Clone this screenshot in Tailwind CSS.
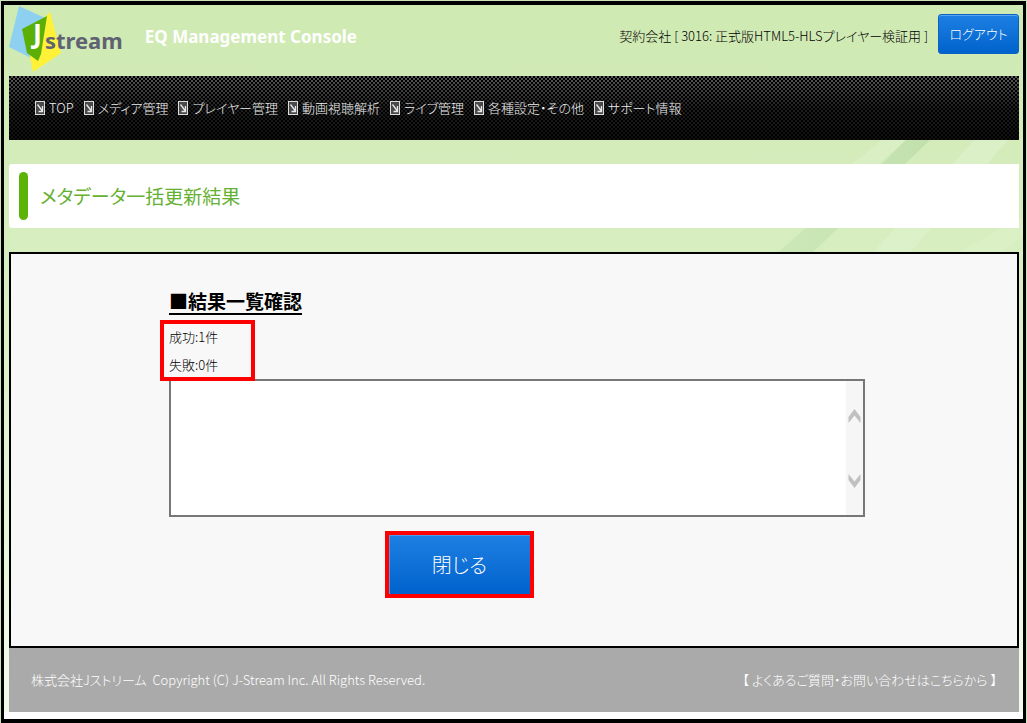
<!DOCTYPE html>
<html lang="ja">
<head>
    <meta charset="UTF-8">
    <meta name="viewport" content="width=device-width, initial-scale=1.0">
    <title>EQ Management Console</title>
    <script src="https://cdn.jsdelivr.net/npm/@tailwindcss/browser@4"></script>
</head>
<body class="bg-[#cfe3bd] p-px font-['Noto_Sans_CJK_JP',sans-serif] text-[13px] font-light text-black [font-feature-settings:'palt']">
    <!-- icon shared by the menu items -->
    <svg class="hidden" aria-hidden="true">
        <symbol id="menu-icon" viewBox="0 0 10 14">
            <path d="M0 0h10v14H0z" fill="#dddddd" />
            <path d="M1 1h8v12H1z" fill="#4a4a4a" />
            <path d="M2.500 3.500L7 9.500M7.500 5v5.500H3.500" fill="none" stroke="#e8e8e8" stroke-width="1.300" />
        </symbol>
    </svg>

    <div class="relative flex min-h-[calc(100vh-2px)] flex-col border-x-3 border-y-4 border-black bg-linear-to-b from-[#d0eab4] from-5% via-[#d7eec0] via-35% to-[#f4fdec] pt-px pr-1 pl-[5px]">

        <!-- background streaks -->
        <svg class="absolute top-[134px] right-0 h-[116px] w-[260px]" viewBox="0 0 260 116" preserveAspectRatio="none" aria-hidden="true">
            <defs>
                <linearGradient id="dark" x1="0" y1="0" x2="1" y2="0">
                    <stop offset="0" stop-color="#b5d9a4" stop-opacity="0.3" />
                    <stop offset="1" stop-color="#b5d9a4" stop-opacity="0.6" />
                </linearGradient>
            </defs>
            <path d="M144 0h24L47 116H12z" fill="url(#dark)" />
            <path d="M120 0h24L118 26H88z" fill="#e0f2ce" opacity="0.5" />
            <path d="M212 0h34L145 116h-37z" fill="#e2f3d2" opacity="0.5" />
            <path d="M260 78v20l-24 18h-48z" fill="#e0f2ce" opacity="0.4" />
        </svg>

        <header class="relative flex h-[70px] justify-between">
            <div class="flex gap-[22px]">
                <a href="#" class="flex" aria-label="J stream">
                    <svg class="h-[66px] w-[54px]" viewBox="0 0 54 66" aria-hidden="true">
                        <path d="M10 0L36 12L28 55L0 41z" fill="#8dd0f0" />
                        <path d="M41 6L52 47L24 66L17 30z" fill="#fff137" />
                        <path d="M13 23L38 10L32 48L29 55L18 47z" fill="#5cb005" />
                        <text x="24" y="37" fill="#fff" font-family="Noto Sans" font-weight="700" font-size="27">J</text>
                    </svg>
                    <span class="-ml-[18px] pt-[11px] font-['Noto_Sans',sans-serif] text-[22px] leading-[46px] font-bold text-[#5f6272]">stream</span>
                </a>
                <span class="pt-[15px] font-['Noto_Sans',sans-serif] text-[17px] leading-[32px] font-bold text-white">EQ Management Console</span>
            </div>
            <div class="flex items-start gap-[10px]">
                <p class="pt-[15px] leading-[30px]">契約会社 [ 3016: 正式版HTML5-HLSプレイヤー検証用 ]</p>
                <button type="button" class="mt-2 h-10 w-[81px] rounded-[3px] border border-[#0a62c6] bg-linear-to-b from-[#1d7fe2] to-[#0062cc] text-[13px] font-light text-white shadow-[inset_0_1px_0_#5aa5ee]">ログアウト</button>
            </div>
        </header>

        <nav class="relative h-16 bg-black bg-[repeating-conic-gradient(#ffffff_0_25%,transparent_0_50%)] bg-size-[4px_4px]">
            <ul class="flex h-full items-center gap-[10px] bg-linear-to-b from-black/65 via-black/88 to-black/94 px-[26px] text-[#eeeeee]">
                <li><a href="#" class="flex items-center gap-1"><svg class="h-[14px] w-[10px]" aria-hidden="true"><use href="#menu-icon" /></svg>TOP</a></li>
                <li><a href="#" class="flex items-center gap-1"><svg class="h-[14px] w-[10px]" aria-hidden="true"><use href="#menu-icon" /></svg>メディア管理</a></li>
                <li><a href="#" class="flex items-center gap-1"><svg class="h-[14px] w-[10px]" aria-hidden="true"><use href="#menu-icon" /></svg>プレイヤー管理</a></li>
                <li><a href="#" class="flex items-center gap-1"><svg class="h-[14px] w-[10px]" aria-hidden="true"><use href="#menu-icon" /></svg>動画視聴解析</a></li>
                <li><a href="#" class="flex items-center gap-1"><svg class="h-[14px] w-[10px]" aria-hidden="true"><use href="#menu-icon" /></svg>ライブ管理</a></li>
                <li><a href="#" class="flex items-center gap-1"><svg class="h-[14px] w-[10px]" aria-hidden="true"><use href="#menu-icon" /></svg>各種設定・その他</a></li>
                <li><a href="#" class="flex items-center gap-1"><svg class="h-[14px] w-[10px]" aria-hidden="true"><use href="#menu-icon" /></svg>サポート情報</a></li>
            </ul>
        </nav>

        <div class="relative my-6 flex h-16 items-center gap-3 rounded-l-[3px] bg-white px-[10px]">
            <span class="h-12 w-[9px] rounded-full bg-[#5cb308]"></span>
            <h1 class="text-[19px] font-normal text-[#66b032]">メタデータ一括更新結果</h1>
        </div>

        <main class="relative flex-1 border-2 border-black bg-[#f8f8f8] pt-[30px] pr-[152px] pb-12 pl-[158px]">
            <h2 class="text-[19px] leading-[34px] font-bold underline decoration-2 underline-offset-4">■結果一覧確認</h2>
            <div class="relative mt-[5px] leading-7">
                <p>成功:1件</p>
                <p>失敗:0件</p>
                <div class="absolute -top-[3px] -left-[9px] z-10 h-[61px] w-[95px] border-4 border-[#ff0000]"></div>
            </div>
            <div class="relative h-[138px]">
                <textarea readonly aria-label="結果一覧" class="block h-full w-full resize-none overflow-hidden border-2 border-[#777777] bg-white p-1 pr-5"></textarea>
                <div class="absolute inset-y-[2px] right-[2px] flex w-[17px] flex-col items-center justify-center gap-[49px] bg-[#f6f6f6]" aria-hidden="true">
                    <svg class="h-4 w-[13px]" viewBox="0 0 13 16"><path d="M6.500 1L12.500 9V15L6.500 7.500L.5 15V9z" fill="#c0c0c0" /></svg>
                    <svg class="h-4 w-[13px]" viewBox="0 0 13 16"><path d="M6.500 15L12.500 7V1L6.500 8.500L.5 1V7z" fill="#c0c0c0" /></svg>
                </div>
            </div>
            <button type="button" class="mt-[14px] ml-[216px] h-[67px] w-[149px] border-4 border-[#ff0000] bg-linear-to-b from-[#1d7fe2] to-[#0062cc] text-[20px] font-light text-white shadow-[inset_1px_1px_0_#4e9ae8]">閉じる</button>
        </main>

        <footer class="relative">
            <div class="flex h-16 items-center justify-between bg-[#aaaaaa] px-[22px] text-white">
                <p>株式会社Jストリーム&nbsp; Copyright (C) J-Stream Inc. All Rights Reserved.</p>
                <a href="#">【 よくあるご質問・お問い合わせはこちらから 】</a>
            </div>
            <div class="-mr-1 -ml-[5px] h-[7px] bg-white"></div>
        </footer>
    </div>
</body>
</html>
